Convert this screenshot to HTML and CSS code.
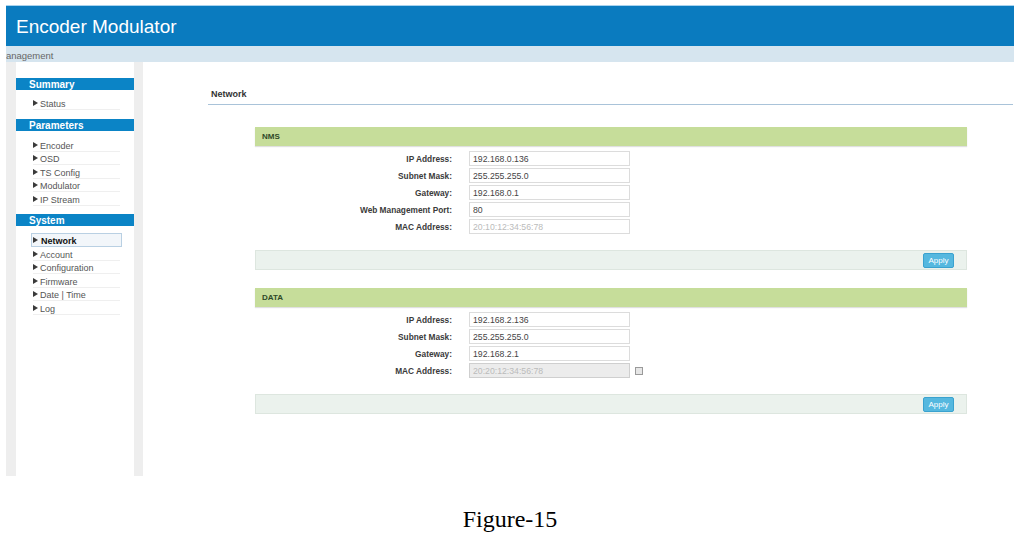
FILE: index.html
```html
<!DOCTYPE html>
<html lang="en">
<head>
<meta charset="utf-8">
<title>Encoder Modulator - Network</title>
<link rel="stylesheet" href="styles.css">
</head>
<body>
<div class="page">
  <div class="topbar">Encoder Modulator</div>
  <div class="subbar"><span>Management</span></div>
  <div class="main">
    <div class="side-frame">
      <nav class="side">
        <div class="grp-title">Summary</div>
        <ul class="grp-list g1">
          <li class="item">Status</li>
        </ul>
        <div class="grp-title">Parameters</div>
        <ul class="grp-list g2">
          <li class="item">Encoder</li>
          <li class="item">OSD</li>
          <li class="item">TS Config</li>
          <li class="item">Modulator</li>
          <li class="item">IP Stream</li>
        </ul>
        <div class="grp-title">System</div>
        <ul class="grp-list g3">
          <li class="item active">Network</li>
          <li class="item">Account</li>
          <li class="item">Configuration</li>
          <li class="item">Firmware</li>
          <li class="item">Date | Time</li>
          <li class="item">Log</li>
        </ul>
      </nav>
    </div>
    <div class="content">
      <div class="page-title">Network</div>

      <section class="panel">
        <div class="panel-head">NMS</div>
        <div class="form">
          <label class="label">IP Address:</label>
          <input class="field" type="text" value="192.168.0.136">
          <label class="label">Subnet Mask:</label>
          <input class="field" type="text" value="255.255.255.0">
          <label class="label">Gateway:</label>
          <input class="field" type="text" value="192.168.0.1">
          <label class="label">Web Management Port:</label>
          <input class="field" type="text" value="80">
          <label class="label">MAC Address:</label>
          <input class="field readonly" type="text" value="20:10:12:34:56:78" readonly>
        </div>
        <div class="panel-foot"><button class="btn">Apply</button></div>
      </section>

      <section class="panel second">
        <div class="panel-head">DATA</div>
        <div class="form three">
          <label class="label">IP Address:</label>
          <input class="field" type="text" value="192.168.2.136"><span></span>
          <label class="label">Subnet Mask:</label>
          <input class="field" type="text" value="255.255.255.0"><span></span>
          <label class="label">Gateway:</label>
          <input class="field" type="text" value="192.168.2.1"><span></span>
          <label class="label">MAC Address:</label>
          <input class="field disabled" type="text" value="20:20:12:34:56:78" disabled>
          <input class="check" type="checkbox">
        </div>
        <div class="panel-foot"><button class="btn">Apply</button></div>
      </section>
    </div>
  </div>
</div>
<div class="caption">Figure-15</div>
</body>
</html>
```
FILE: styles.css
```css
html, body {
  margin: 0;
  padding: 0;
  background: #fff;
  font-family: "Liberation Sans", Arial, sans-serif;
}

.page {
  width: 1008px;
  margin-left: 6px;
  padding-top: 5px;
}

.topbar {
  height: 40px;
  border-top: 1px solid #a9d3ee;
  background: #0a7bbf;
  color: #fff;
  font-size: 19px;
  line-height: 41px;
  padding-left: 10px;
}

.subbar {
  box-sizing: border-box;
  height: 16px;
  padding-top: 2px;
  background: #d6e5ef;
  color: #666;
  font-size: 9.5px;
  line-height: 15px;
  overflow: hidden;
  white-space: nowrap;
}
.subbar span {
  display: inline-block;
  margin-left: -8px;
}

.main {
  display: flex;
  height: 414px;
}

.side-frame {
  background: #eeeeee;
  padding: 0 9px 0 10px;
}

.side {
  width: 118px;
  height: 100%;
  background: #fff;
  padding-top: 16px;
  box-sizing: border-box;
}

.grp-title {
  height: 12px;
  line-height: 13px;
  background: #0b84c6;
  color: #fff;
  font-size: 10px;
  font-weight: bold;
  padding-left: 13px;
}

.grp-list {
  list-style: none;
  margin: 0;
  padding: 6px 0 9.5px 0;
}
.grp-list.g2 { padding: 7px 0 8.5px 0; }
.grp-list.g3 { padding: 7px 0 0 0; }

.item {
  box-sizing: border-box;
  height: 13.5px;
  width: 87px;
  margin-left: 17px;
  padding-top: 3px;
  border-bottom: 1px solid #efefef;
  font-size: 9px;
  color: #555;
  display: flex;
  align-items: center;
  white-space: nowrap;
}
.item::before {
  content: "";
  border-left: 5px solid #3a3a3a;
  border-top: 3px solid transparent;
  border-bottom: 3px solid transparent;
  margin-right: 2px;
  margin-top: -2px;
}
.item.active {
  height: 14px;
  width: 91px;
  margin-left: 15px;
  padding-left: 1px;
  padding-top: 2px;
  border: 1px solid #b9d0e3;
  background: #f2f6fa;
  color: #111;
  font-weight: bold;
}
.item.active::before {
  margin-right: 3px;
}

.content {
  flex: 1;
  padding: 0 1px 0 65px;
}

.page-title {
  padding: 26px 0 4px 3px;
  line-height: 12px;
  font-size: 9px;
  font-weight: bold;
  color: #333;
  border-bottom: 1.5px solid #a9c3d9;
}

.panel {
  margin: 22px 46px 0 47px;
}
.panel.second {
  margin-top: 18px;
}

.panel-head {
  height: 19px;
  line-height: 19px;
  background: #c6dd9a;
  box-shadow: 0 1px 1px rgba(0, 0, 0, 0.12);
  color: #2e4a28;
  font-size: 8px;
  font-weight: bold;
  padding-left: 7px;
}

.form {
  display: grid;
  grid-template-columns: 197px 178px;
  row-gap: 2px;
  align-items: center;
  padding: 5px 0 16px 0;
}
.form.three {
  grid-template-columns: 197px 178px 20px;
}

.label {
  text-align: right;
  font-size: 8.3px;
  font-weight: bold;
  color: #3a3a3a;
}

.field {
  box-sizing: border-box;
  height: 15px;
  width: 161px;
  margin: 0 0 0 17px;
  border: 1px solid #dcdcdc;
  padding: 0 3px;
  font-family: "Liberation Sans", Arial, sans-serif;
  font-size: 8.7px;
  color: #444;
  background: #fff;
  outline: none;
}
.field.readonly {
  color: #bbb;
}
.field.disabled {
  color: #bbb;
  background: #ececec;
  border-color: #cfcfcf;
}

.check {
  appearance: none;
  -webkit-appearance: none;
  box-sizing: border-box;
  width: 8px;
  height: 8px;
  margin: 0 0 0 5px;
  border: 1px solid #9a9a9a;
  background: #e6e6e6;
}

.panel-foot {
  box-sizing: border-box;
  height: 20px;
  background: #ebf2ed;
  border: 1px solid #dde6df;
  display: flex;
  justify-content: flex-end;
  align-items: center;
  padding-right: 12px;
}

.btn {
  box-sizing: border-box;
  width: 31px;
  height: 15px;
  padding: 0;
  background: #55b8df;
  border: 1px solid #3aa2cf;
  border-radius: 2px;
  color: #fff;
  font-family: "Liberation Sans", Arial, sans-serif;
  font-size: 8px;
}

.caption {
  width: 1020px;
  margin-top: 29px;
  text-align: center;
  font-family: "Liberation Serif", "Times New Roman", serif;
  font-size: 24px;
  line-height: 28px;
  color: #000;
}
```
